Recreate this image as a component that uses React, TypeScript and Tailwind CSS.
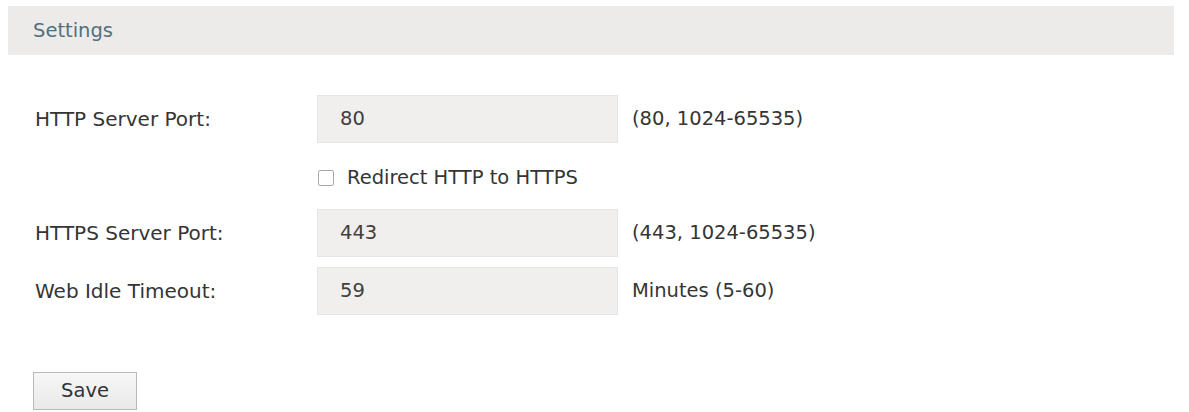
import React from "react";

const font = { fontFamily: '"DejaVu Sans", Verdana, sans-serif' };

function Row({ label, value, hint }: { label: string; value: string; hint: string }) {
  return (
    <div className="flex items-center h-[48px]">
      <div className="w-[282px] text-[20px] text-[#353535]">{label}</div>
      <div className="w-[301px] h-[48px] bg-[#f1efed] border border-[#e7e5e3] flex items-center pl-[22px] text-[19.5px] text-[#404040]">
        {value}
      </div>
      <div className="ml-[14px] text-[19.5px] text-[#353535]">{hint}</div>
    </div>
  );
}

export default function App() {
  return (
    <div className="w-[1189px] h-[412px] bg-white overflow-hidden" style={font}>
      <div className="pt-[6px] pl-[8px] pr-[15px]">
        <div className="h-[49px] bg-[#ecebe9] flex items-center pl-[25px] text-[19.5px] text-[#52707e]">
          Settings
        </div>
      </div>
      <div className="pl-[35px] pt-[40px]">
        <Row label="HTTP Server Port:" value="80" hint="(80, 1024-65535)" />
        <div className="flex items-center h-[20px] mt-[25px] mb-[21px] pl-[283px]">
          <div className="w-[16px] h-[16px] border border-[#a9a9a9] rounded-[2px] bg-white" />
          <span className="ml-[13px] text-[19.5px] text-[#353535]">Redirect HTTP to HTTPS</span>
        </div>
        <Row label="HTTPS Server Port:" value="443" hint="(443, 1024-65535)" />
        <div className="h-[10px]" />
        <Row label="Web Idle Timeout:" value="59" hint="Minutes (5-60)" />
        <div className="mt-[57px] -ml-[2px]">
          <button className="w-[104px] h-[38px] border border-[#b9b9b9] bg-gradient-to-b from-[#f7f7f7] to-[#e9e9e9] text-[19.5px] text-[#333] flex items-center justify-center">
            Save
          </button>
        </div>
      </div>
    </div>
  );
}
